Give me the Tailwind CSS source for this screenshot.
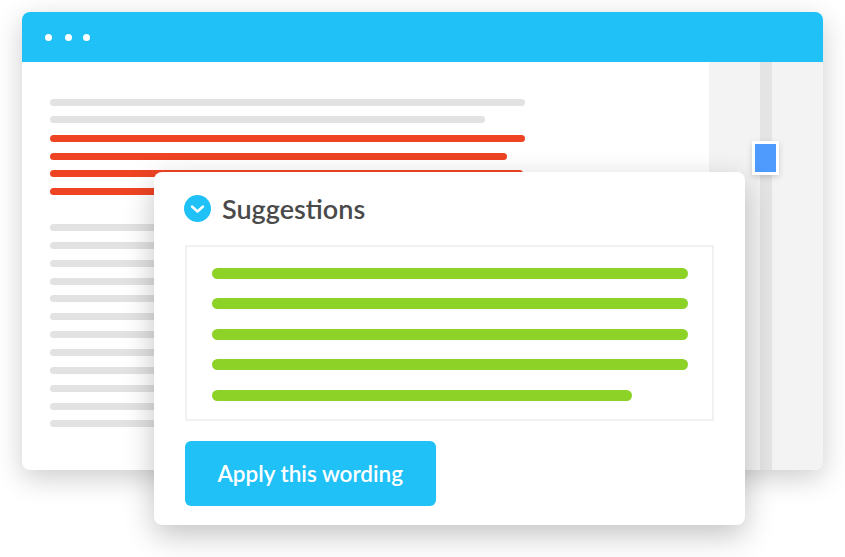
<!DOCTYPE html>
<html lang="en">
<head>
    <meta charset="UTF-8">
    <meta name="viewport" content="width=device-width, initial-scale=1.0">
    <title>Suggestions</title>
    <script src="https://cdn.jsdelivr.net/npm/@tailwindcss/browser@4"></script>
</head>
<body class="bg-white w-[845px] h-[557px] overflow-hidden relative font-['Lato',sans-serif]">
    <div class="pt-[12px] pl-[22px]">
        <!-- Browser window -->
        <div class="w-[800.5px] h-[458px] rounded-lg overflow-hidden bg-white flex flex-col shadow-[0_8px_28px_rgba(0,0,0,0.2)]">
            <div class="h-[49.5px] bg-[#1fc1f7] flex items-center pl-[22.5px] pt-[1px] shrink-0">
                <span class="w-[7px] h-[7px] rounded-full bg-white"></span>
                <span class="w-[7px] h-[7px] rounded-full bg-white ml-[13px]"></span>
                <span class="w-[7px] h-[7px] rounded-full bg-white ml-[11px]"></span>
            </div>
            <div class="flex flex-1">
                <div class="w-[687px] pl-[27.5px] pt-[37px] flex flex-col gap-[10.85px]">
                    <div class="w-[475px] h-[7px] rounded-full bg-[#e2e2e2]"></div>
                    <div class="w-[435px] h-[7px] rounded-full bg-[#e2e2e2]"></div>
                    <div class="w-[475px] h-[7px] rounded-full bg-[#ee4423] mt-[0.5px]"></div>
                    <div class="w-[457px] h-[7px] rounded-full bg-[#ee4423]"></div>
                    <div class="w-[473px] h-[7px] rounded-full bg-[#ee4423]"></div>
                    <div class="w-[400px] h-[7px] rounded-full bg-[#ee4423] mb-[18px]"></div>
                    <div class="w-[400px] h-[7px] rounded-full bg-[#e2e2e2]"></div>
                    <div class="w-[400px] h-[7px] rounded-full bg-[#e2e2e2]"></div>
                    <div class="w-[400px] h-[7px] rounded-full bg-[#e2e2e2]"></div>
                    <div class="w-[400px] h-[7px] rounded-full bg-[#e2e2e2]"></div>
                    <div class="w-[400px] h-[7px] rounded-full bg-[#e2e2e2]"></div>
                    <div class="w-[400px] h-[7px] rounded-full bg-[#e2e2e2]"></div>
                    <div class="w-[400px] h-[7px] rounded-full bg-[#e2e2e2]"></div>
                    <div class="w-[400px] h-[7px] rounded-full bg-[#e2e2e2]"></div>
                    <div class="w-[400px] h-[7px] rounded-full bg-[#e2e2e2]"></div>
                    <div class="w-[400px] h-[7px] rounded-full bg-[#e2e2e2]"></div>
                    <div class="w-[400px] h-[7px] rounded-full bg-[#e2e2e2]"></div>
                    <div class="w-[400px] h-[7px] rounded-full bg-[#e2e2e2]"></div>
                </div>
                <!-- Sidebar with scrollbar track -->
                <div class="flex-1 bg-[#f3f3f3] pl-[51px]">
                    <div class="w-[12px] h-full bg-[#e4e4e4]"></div>
                </div>
            </div>
        </div>
    </div>

    <!-- Scroll thumb -->
    <div class="absolute left-[752px] top-[141px] w-[27px] h-[34px] bg-white p-[3px] shadow-[0_2px_6px_rgba(0,0,0,0.16)]">
        <div class="w-full h-full bg-[#4e9bfd]"></div>
    </div>

    <!-- Suggestions card -->
    <div class="absolute left-[154px] top-[171.5px] w-[590.5px] h-[353px] bg-white rounded-lg pl-[31px] shadow-[0_10px_30px_rgba(0,0,0,0.24)]">
        <div class="h-[73px] flex items-center">
            <svg class="w-[27px] h-[27px] -ml-[1px] shrink-0" viewBox="0 0 27 27">
                <circle cx="13.5" cy="13.5" r="13.5" fill="#1fc1f7"/>
                <path d="M8 11.5l5.5 5 5.5-5" fill="none" stroke="#fff" stroke-width="2.4" stroke-linecap="round" stroke-linejoin="round"/>
            </svg>
            <h2 class="ml-[11px] text-[27px] font-semibold text-[#4a4a4a] leading-none [font-variant-ligatures:common-ligatures_discretionary-ligatures]">Suggestions</h2>
        </div>
        <div class="w-[528.5px] h-[176.5px] border-2 border-[#f1f1f1] pl-[25px] pt-[21px] flex flex-col gap-[19.6px]">
            <div class="w-[476px] h-[11px] rounded-full bg-[#8cd227]"></div>
            <div class="w-[476px] h-[11px] rounded-full bg-[#8cd227]"></div>
            <div class="w-[476px] h-[11px] rounded-full bg-[#8cd227]"></div>
            <div class="w-[476px] h-[11px] rounded-full bg-[#8cd227]"></div>
            <div class="w-[420px] h-[11px] rounded-full bg-[#8cd227]"></div>
        </div>
        <button class="mt-[19.5px] w-[250.5px] h-[65px] pt-[2px] rounded-md bg-[#1fc1f7] text-white text-[22.5px] font-semibold flex items-center justify-center">Apply this wording</button>
    </div>
</body>
</html>
